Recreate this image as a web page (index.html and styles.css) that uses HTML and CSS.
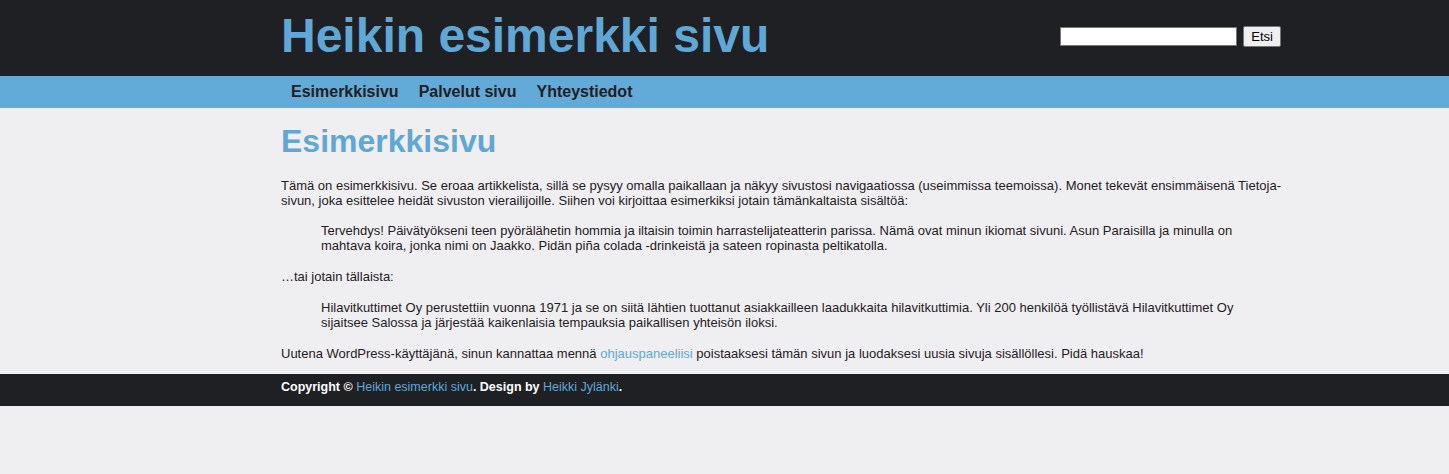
FILE: index.html
```html
<!DOCTYPE html>
<html lang="fi">
<head>
<meta charset="utf-8">
<title>Heikin esimerkki sivu</title>
<link rel="stylesheet" href="styles.css">
</head>
<body>
<header class="site-header">
  <div class="wrap header-inner">
    <h1 class="site-title">Heikin esimerkki sivu</h1>
    <form class="search">
      <input class="search-input" type="text">
      <button class="search-btn" type="button">Etsi</button>
    </form>
  </div>
</header>
<nav class="site-nav">
  <div class="wrap nav-inner">
    <a class="nav-link" href="#">Esimerkkisivu</a>
    <a class="nav-link" href="#">Palvelut sivu</a>
    <a class="nav-link" href="#">Yhteystiedot</a>
  </div>
</nav>
<main class="content">
  <div class="wrap">
    <h2 class="page-title">Esimerkkisivu</h2>
    <p class="text first">Tämä on esimerkkisivu. Se eroaa artikkelista, sillä se pysyy omalla paikallaan ja näkyy sivustosi navigaatiossa (useimmissa teemoissa). Monet tekevät ensimmäisenä Tietoja-sivun, joka esittelee heidät sivuston vierailijoille. Siihen voi kirjoittaa esimerkiksi jotain tämänkaltaista sisältöä:</p>
    <blockquote class="quote"><p class="text">Tervehdys! Päivätyökseni teen pyörälähetin hommia ja iltaisin toimin harrastelijateatterin parissa. Nämä ovat minun ikiomat sivuni. Asun Paraisilla ja minulla on mahtava koira, jonka nimi on Jaakko. Pidän piña colada -drinkeistä ja sateen ropinasta peltikatolla.</p></blockquote>
    <p class="text">…tai jotain tällaista:</p>
    <blockquote class="quote"><p class="text">Hilavitkuttimet Oy perustettiin vuonna 1971 ja se on siitä lähtien tuottanut asiakkailleen laadukkaita hilavitkuttimia. Yli 200 henkilöä työllistävä Hilavitkuttimet Oy sijaitsee Salossa ja järjestää kaikenlaisia tempauksia paikallisen yhteisön iloksi.</p></blockquote>
    <p class="text last">Uutena WordPress-käyttäjänä, sinun kannattaa mennä <a class="link" href="#">ohjauspaneeliisi</a> poistaaksesi tämän sivun ja luodaksesi uusia sivuja sisällöllesi. Pidä hauskaa!</p>
  </div>
</main>
<footer class="site-footer">
  <div class="wrap footer-inner">Copyright © <a class="link" href="#">Heikin esimerkki sivu</a>. Design by <a class="link" href="#">Heikki Jylänki</a>.</div>
</footer>
</body>
</html>
```

FILE: styles.css
```css
html, body {
  margin: 0;
  padding: 0;
}
body {
  background: #efeff1;
  font-family: "Liberation Sans", Arial, sans-serif;
  color: #1f2024;
}
.wrap {
  width: 1000px;
  margin-left: 281px;
}
.site-header {
  background: #1f2024;
  height: 76px;
}
.header-inner {
  display: flex;
  align-items: center;
  justify-content: space-between;
  height: 76px;
}
.site-title {
  margin: 0;
  font-size: 48px;
  font-weight: bold;
  color: #5fa8d6;
  line-height: 1;
  margin-top: -4px;
}
.search {
  display: flex;
  align-items: center;
  gap: 6px;
  margin-top: -4px;
}
.search-input {
  width: 173px;
  height: 17px;
  padding: 0 1px;
  border: 1px solid #767676;
  background: #fff;
  margin: 0;
  box-sizing: content-box;
}
.search-btn {
  height: 21px;
  padding: 0 7px;
  font-family: "Liberation Sans", Arial, sans-serif;
  font-size: 13px;
  color: #000;
  background: #efefef;
  border: 1px solid #767676;
  border-radius: 2px;
  margin: 0;
}
.site-nav {
  background: #62aad7;
  height: 32px;
}
.nav-inner {
  display: flex;
  align-items: center;
  height: 32px;
}
.nav-link {
  padding: 0 10px;
  font-size: 16px;
  font-weight: bold;
  color: #1f2024;
  text-decoration: none;
}
.content {
  padding: 15px 0 0;
}
.page-title {
  margin: 0 0 18px;
  font-size: 32px;
  font-weight: bold;
  color: #5fa8d6;
  line-height: 37px;
}
.text {
  font-size: 13px;
  line-height: 15px;
  margin: 0 0 16px;
  color: #1f2024;
}
.text.first {
  margin-bottom: 15px;
}
.text.last {
  margin-bottom: 13px;
}
.quote {
  margin: 0 40px 16px;
}
.quote .text {
  margin: 0;
}
.link {
  color: #5fa8d6;
  text-decoration: none;
  font-weight: normal;
}
.site-footer {
  background: #1f2024;
  height: 32px;
}
.footer-inner {
  display: flex;
  align-items: center;
  height: 26px;
  color: #fff;
  font-weight: bold;
  font-size: 12.5px;
  white-space: pre;
}
```
